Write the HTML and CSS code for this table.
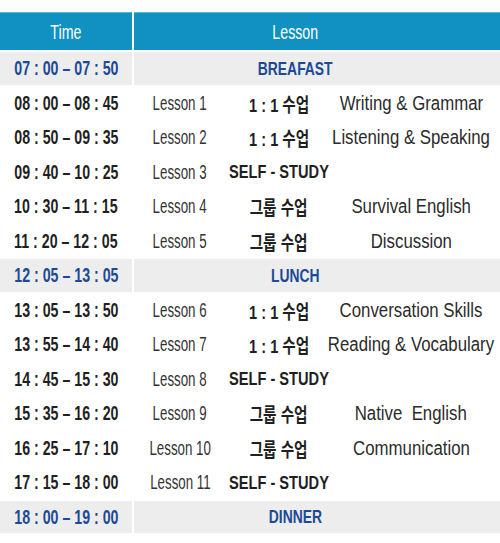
FILE: index.html
```html
<!DOCTYPE html>
<html lang="ko">
<head>
<meta charset="utf-8">
<title>Schedule</title>
<link rel="stylesheet" href="styles.css">
</head>
<body>
<div class="table">
  <div class="row head">
    <div class="c-time"><span class="sq hd">Time</span></div>
    <div class="c-lesson wide"><span class="sq hd">Lesson</span></div>
  </div>
  <div class="row meal">
    <div class="c-time"><span class="sq tm">07 : 00 – 07 : 50</span></div>
    <div class="c-lesson wide"><span class="sq ml">BREAFAST</span></div>
  </div>
  <div class="row">
    <div class="c-time"><span class="sq tm">08 : 00 – 08 : 45</span></div>
    <div class="c-lesson cls"><span class="sq num">Lesson 1</span><span class="sq type">1 : 1 수업</span><span class="sq subj">Writing &amp; Grammar</span></div>
  </div>
  <div class="row">
    <div class="c-time"><span class="sq tm">08 : 50 – 09 : 35</span></div>
    <div class="c-lesson cls"><span class="sq num">Lesson 2</span><span class="sq type">1 : 1 수업</span><span class="sq subj">Listening &amp; Speaking</span></div>
  </div>
  <div class="row">
    <div class="c-time"><span class="sq tm">09 : 40 – 10 : 25</span></div>
    <div class="c-lesson cls"><span class="sq num">Lesson 3</span><span class="sq type">SELF - STUDY</span><span class="subj"></span></div>
  </div>
  <div class="row">
    <div class="c-time"><span class="sq tm">10 : 30 – 11 : 15</span></div>
    <div class="c-lesson cls"><span class="sq num">Lesson 4</span><span class="sq type">그룹 수업</span><span class="sq subj">Survival English</span></div>
  </div>
  <div class="row">
    <div class="c-time"><span class="sq tm">11 : 20 – 12 : 05</span></div>
    <div class="c-lesson cls"><span class="sq num">Lesson 5</span><span class="sq type">그룹 수업</span><span class="sq subj">Discussion</span></div>
  </div>
  <div class="row meal">
    <div class="c-time"><span class="sq tm">12 : 05 – 13 : 05</span></div>
    <div class="c-lesson wide"><span class="sq ml">LUNCH</span></div>
  </div>
  <div class="row">
    <div class="c-time"><span class="sq tm">13 : 05 – 13 : 50</span></div>
    <div class="c-lesson cls"><span class="sq num">Lesson 6</span><span class="sq type">1 : 1 수업</span><span class="sq subj">Conversation Skills</span></div>
  </div>
  <div class="row">
    <div class="c-time"><span class="sq tm">13 : 55 – 14 : 40</span></div>
    <div class="c-lesson cls"><span class="sq num">Lesson 7</span><span class="sq type">1 : 1 수업</span><span class="sq subj">Reading &amp; Vocabulary</span></div>
  </div>
  <div class="row">
    <div class="c-time"><span class="sq tm">14 : 45 – 15 : 30</span></div>
    <div class="c-lesson cls"><span class="sq num">Lesson 8</span><span class="sq type">SELF - STUDY</span><span class="subj"></span></div>
  </div>
  <div class="row">
    <div class="c-time"><span class="sq tm">15 : 35 – 16 : 20</span></div>
    <div class="c-lesson cls"><span class="sq num">Lesson 9</span><span class="sq type">그룹 수업</span><span class="sq subj">Native&nbsp; English</span></div>
  </div>
  <div class="row">
    <div class="c-time"><span class="sq tm">16 : 25 – 17 : 10</span></div>
    <div class="c-lesson cls"><span class="sq num">Lesson 10</span><span class="sq type">그룹 수업</span><span class="sq subj">Communication</span></div>
  </div>
  <div class="row">
    <div class="c-time"><span class="sq tm">17 : 15 – 18 : 00</span></div>
    <div class="c-lesson cls"><span class="sq num">Lesson 11</span><span class="sq type">SELF - STUDY</span><span class="subj"></span></div>
  </div>
  <div class="row meal">
    <div class="c-time"><span class="sq tm">18 : 00 – 19 : 00</span></div>
    <div class="c-lesson wide"><span class="sq ml">DINNER</span></div>
  </div>
</div>
</body>
</html>
```

FILE: styles.css
```css
html, body {
  margin: 0;
  padding: 0;
  background: #ffffff;
}
body {
  padding-top: 12px;
  font-family: "Liberation Sans", "Noto Sans CJK KR", sans-serif;
  color: #333333;
}
.table {
  width: 500px;
}
.row {
  display: grid;
  grid-template-columns: 132px 1fr;
  column-gap: 2px;
  height: 34.5px;
  box-sizing: border-box;
  border-top: 2px solid #ffffff;
}
.row.head {
  height: 38px;
  border-top: 0;
}
.row.head > div {
  background: #1190c2;
  border-top: 1px solid #5db3d6;
  box-sizing: border-box;
}
.row.meal > div {
  background: #ededed;
}
.c-time, .c-lesson {
  display: flex;
  align-items: center;
  justify-content: center;
  white-space: nowrap;
  padding-top: 1px;
  box-sizing: border-box;
}
.c-lesson.wide {
  padding-right: 44px;
}
.c-lesson.cls {
  display: grid;
  grid-template-columns: 92px 106px 158px;
  justify-content: start;
  justify-items: center;
  align-items: center;
}
.sq {
  display: inline-block;
  white-space: nowrap;
  transform-origin: 50% 50%;
}
.hd {
  color: #ffffff;
  font-size: 20px;
  transform: scaleX(0.71);
}
.tm {
  font-size: 20px;
  font-weight: bold;
  color: #1f1f1f;
  transform: scaleX(0.71);
}
.meal .tm {
  color: #1c4a95;
}
.ml {
  font-size: 19px;
  font-weight: bold;
  color: #1c4a95;
  transform: scaleX(0.73);
}
.num {
  font-size: 20px;
  color: #333333;
  transform: scaleX(0.665);
}
.type {
  font-size: 19px;
  font-weight: bold;
  color: #1f1f1f;
  transform: scaleX(0.77);
}
.subj {
  font-size: 20px;
  color: #2b2b2b;
  transform: scaleX(0.84);
}
```
